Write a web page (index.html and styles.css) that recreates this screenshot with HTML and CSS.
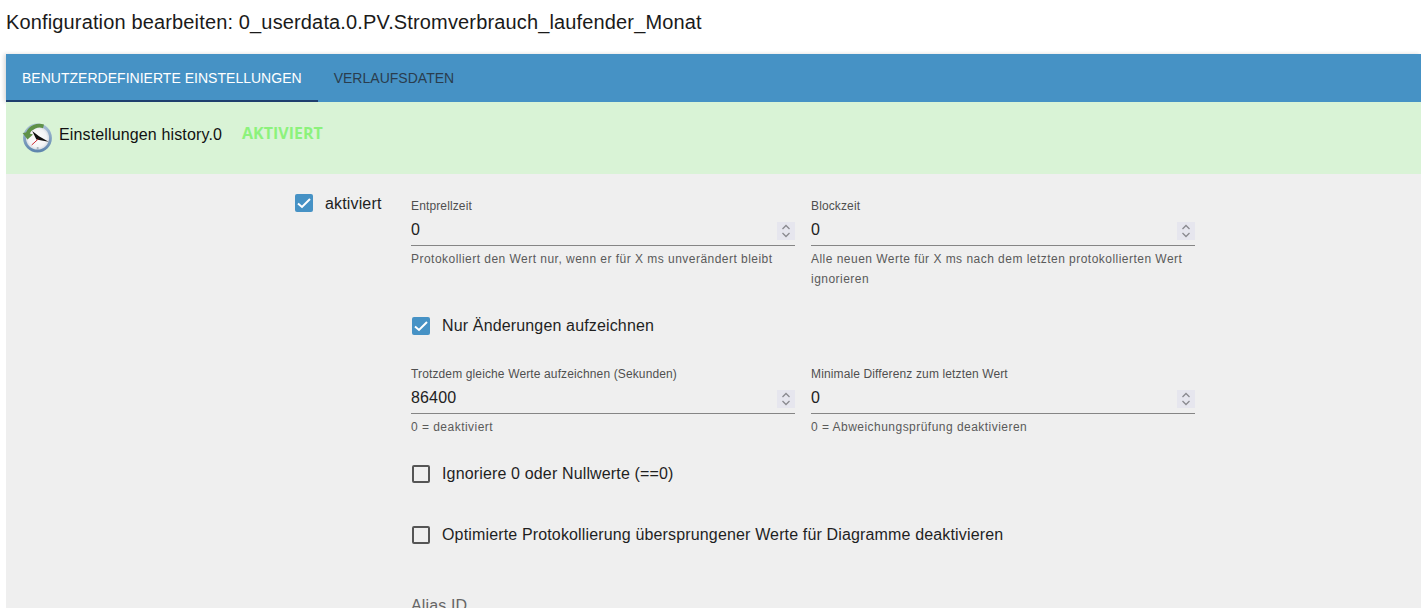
FILE: index.html
```html
<!DOCTYPE html>
<html lang="de">
<head>
<meta charset="utf-8">
<title>Konfiguration bearbeiten</title>
<link rel="stylesheet" href="styles.css">
</head>
<body>
<h1 class="title">Konfiguration bearbeiten: 0_userdata.0.PV.Stromverbrauch_laufender_Monat</h1>
<div class="panel">
  <nav class="tabs">
    <div class="tab active">BENUTZERDEFINIERTE EINSTELLUNGEN</div>
    <div class="tab">VERLAUFSDATEN</div>
  </nav>
  <header class="adapter">
    <svg class="adapter-icon" viewBox="0 0 32 32" width="32" height="32">
      <defs>
        <radialGradient id="face" cx="50%" cy="50%" r="50%">
          <stop offset="0" stop-color="#ffffff"/>
          <stop offset="0.7" stop-color="#f2f3f5"/>
          <stop offset="1" stop-color="#c6ced8"/>
        </radialGradient>
        <linearGradient id="rim" x1="0" y1="0" x2="0" y2="1">
          <stop offset="0" stop-color="#a8bfd6"/>
          <stop offset="1" stop-color="#5f86ae"/>
        </linearGradient>
      </defs>
      <circle cx="15.5" cy="16" r="13" fill="url(#face)" stroke="url(#rim)" stroke-width="2.8"/>
      <path d="M22 2.6 A14.5 14.5 0 0 0 4 10.5 L0.6 11 L5.5 17.5 L11 12.5 L7.8 11.5 A11 11 0 0 1 21 6.2 Z" fill="#5f9147"/>
      <path d="M10.2 9 L17 14.2 L26.6 19.7 L14.4 17.4 Z" fill="#111"/>
      <path d="M16.3 17 L9.7 23" stroke="#cc2a33" stroke-width="1" fill="none"/>
      <circle cx="15.7" cy="26" r="1.1" fill="#aab2ba"/>
    </svg>
    <span class="adapter-name">Einstellungen history.0</span>
    <span class="adapter-state">AKTIVIERT</span>
  </header>
  <main class="body">
    <div class="side">
      <label class="check check-side">
        <span class="box on"><svg viewBox="0 0 18 18" width="18" height="18"><path d="M3 9.5 L7 13 L15 5" fill="none" stroke="#fff" stroke-width="2"/></svg></span>
        <span class="check-text">aktiviert</span>
      </label>
    </div>
    <div class="form">
      <div class="row">
        <div class="field">
          <div class="field-label">Entprellzeit</div>
          <div class="field-input"><span>0</span><span class="spin"><svg viewBox="0 0 18 18" width="18" height="18"><path d="M5.5 7 L9 3.5 L12.5 7 M5.5 11 L9 14.5 L12.5 11" fill="none" stroke="#8a8a8f" stroke-width="1.3"/></svg></span></div>
          <div class="field-help">Protokolliert den Wert nur, wenn er für X ms unverändert bleibt</div>
        </div>
        <div class="field">
          <div class="field-label">Blockzeit</div>
          <div class="field-input"><span>0</span><span class="spin"><svg viewBox="0 0 18 18" width="18" height="18"><path d="M5.5 7 L9 3.5 L12.5 7 M5.5 11 L9 14.5 L12.5 11" fill="none" stroke="#8a8a8f" stroke-width="1.3"/></svg></span></div>
          <div class="field-help">Alle neuen Werte für X ms nach dem letzten protokollierten Wert ignorieren</div>
        </div>
      </div>
      <label class="check check-form check-only">
        <span class="box on"><svg viewBox="0 0 18 18" width="18" height="18"><path d="M3 9.5 L7 13 L15 5" fill="none" stroke="#fff" stroke-width="2"/></svg></span>
        <span class="check-text">Nur Änderungen aufzeichnen</span>
      </label>
      <div class="row row-second">
        <div class="field">
          <div class="field-label">Trotzdem gleiche Werte aufzeichnen (Sekunden)</div>
          <div class="field-input"><span>86400</span><span class="spin"><svg viewBox="0 0 18 18" width="18" height="18"><path d="M5.5 7 L9 3.5 L12.5 7 M5.5 11 L9 14.5 L12.5 11" fill="none" stroke="#8a8a8f" stroke-width="1.3"/></svg></span></div>
          <div class="field-help">0 = deaktiviert</div>
        </div>
        <div class="field">
          <div class="field-label">Minimale Differenz zum letzten Wert</div>
          <div class="field-input"><span>0</span><span class="spin"><svg viewBox="0 0 18 18" width="18" height="18"><path d="M5.5 7 L9 3.5 L12.5 7 M5.5 11 L9 14.5 L12.5 11" fill="none" stroke="#8a8a8f" stroke-width="1.3"/></svg></span></div>
          <div class="field-help">0 = Abweichungsprüfung deaktivieren</div>
        </div>
      </div>
      <label class="check check-form check-ignore">
        <span class="box"></span>
        <span class="check-text">Ignoriere 0 oder Nullwerte (==0)</span>
      </label>
      <label class="check check-form check-optimize">
        <span class="box"></span>
        <span class="check-text">Optimierte Protokollierung übersprungener Werte für Diagramme deaktivieren</span>
      </label>
      <div class="alias">Alias ID</div>
    </div>
  </main>
</div>
</body>
</html>
```
FILE: styles.css
```css
html, body {
  margin: 0;
  height: 608px;
  overflow: hidden;
  background: #fff;
  font-family: "Liberation Sans", Arial, sans-serif;
  color: #1a1a1a;
}
.title {
  margin: 0;
  height: 54px;
  padding: 11px 0 0 6px;
  box-sizing: border-box;
  font-size: 20px;
  line-height: 23px;
  font-weight: 400;
  letter-spacing: 0.145px;
}
.panel {
  margin-left: 6px;
}
.tabs {
  display: flex;
  height: 48px;
  background: #4692c5;
  box-shadow: -2px 0 4px rgba(0, 0, 0, 0.15);
}
.tab {
  padding: 0 16px;
  line-height: 48px;
  font-size: 14px;
  letter-spacing: 0.02px;
  color: #2a3d4e;
  white-space: nowrap;
}
.tab.active {
  color: #fff;
  box-shadow: inset 0 -2px 0 #1f3f6e;
}
.adapter {
  position: relative;
  display: flex;
  align-items: flex-start;
  height: 72px;
  box-sizing: border-box;
  padding: 20px 0 0 16px;
  background: #d9f3d6;
}
.adapter-icon {
  flex: none;
  margin-right: 5px;
}
.adapter-name {
  font-size: 16px;
  line-height: 24px;
  margin-top: 1px;
  letter-spacing: 0.14px;
  color: #111;
}
.adapter-state {
  margin: 0 0 0 20px;
  font-family: "Open Sans", sans-serif;
  font-size: 16px;
  line-height: 22px;
  font-weight: 700;
  color: #8cf27c;
}
.body {
  display: flex;
  height: 434px;
  overflow: hidden;
  background: #efefef;
}
.side {
  flex: none;
  width: 405px;
  box-sizing: border-box;
  padding: 20px 0 0 289px;
}
.form {
  flex: none;
  width: 784px;
  padding-top: 25px;
}
.row {
  display: flex;
  gap: 16px;
}
.row-second {
  margin-top: 32px;
}
.field {
  width: 384px;
}
.field-label {
  font-size: 12px;
  line-height: 14px;
  letter-spacing: 0.13px;
  color: #4f4f4f;
}
.field-input {
  display: flex;
  justify-content: space-between;
  align-items: center;
  height: 33px;
  box-sizing: border-box;
  border-bottom: 1px solid #858585;
  font-size: 16px;
  padding-top: 2px;
  letter-spacing: 0.15px;
  color: #222;
}
.spin {
  display: block;
  width: 18px;
  height: 18px;
  background: #e6e6ee;
  margin-top: 1px;
}
.spin svg {
  display: block;
}
.field-help {
  margin-top: 3px;
  font-size: 12px;
  line-height: 20px;
  letter-spacing: 0.47px;
  color: #5a5a5a;
}
.check {
  display: flex;
  align-items: center;
  gap: 12px;
  height: 18px;
  font-size: 16px;
  line-height: 18px;
  letter-spacing: 0.15px;
  color: #1f1f1f;
}
.check-side .check-text {
  padding-top: 1px;
}
.check-form {
  margin-left: 1px;
}
.check-only {
  margin-top: 28px;
}
.check-ignore {
  margin-top: 28px;
}
.check-optimize {
  margin-top: 43px;
}
.box {
  flex: none;
  display: block;
  width: 18px;
  height: 18px;
  box-sizing: border-box;
  border: 2px solid #555;
  border-radius: 2px;
}
.box.on {
  border: 0;
  background: #4692c5;
}
.box svg {
  display: block;
}
.alias {
  margin-top: 52px;
  font-size: 16px;
  line-height: 20px;
  letter-spacing: 0.15px;
  color: #666;
}
```
